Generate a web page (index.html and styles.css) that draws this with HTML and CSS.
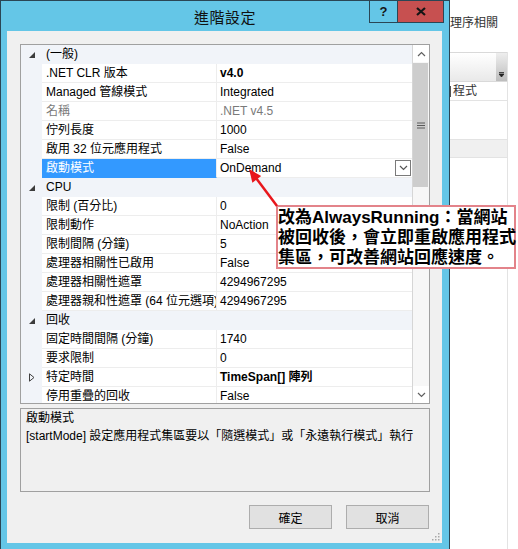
FILE: index.html
```html
<!DOCTYPE html>
<html lang="zh-Hant">
<head>
<meta charset="utf-8">
<title>進階設定</title>
<link rel="stylesheet" href="styles.css">
</head>
<body>
<div class="screen">
  <div class="dlg">
    <div class="titlebar">
      <span></span>
      <div class="title">進階設定</div>
      <div class="tbtns">
        <div class="help">?</div>
        <div class="close"><svg width="10" height="9" viewBox="0 0 10 9"><path d="M1 1L9 8M9 1L1 8" stroke="#151515" stroke-width="2.2" fill="none"/></svg></div>
      </div>
    </div>
    <div class="client">
      <div class="grid">
        <div class="rows">
          <div class="cat"><span class="tw"><svg class="exp" width="6" height="6" viewBox="0 0 6 6"><path d="M6 0V6H0Z"/></svg></span><span class="cl">(一般)</span></div>
          <div class="row"><span class="ind"></span><span class="name">.NET CLR 版本</span><span class="val b">v4.0</span></div>
          <div class="row"><span class="ind"></span><span class="name">Managed 管線模式</span><span class="val">Integrated</span></div>
          <div class="row dim"><span class="ind"></span><span class="name">名稱</span><span class="val">.NET v4.5</span></div>
          <div class="row"><span class="ind"></span><span class="name">佇列長度</span><span class="val">1000</span></div>
          <div class="row"><span class="ind"></span><span class="name">啟用 32 位元應用程式</span><span class="val">False</span></div>
          <div class="row"><span class="ind"></span><span class="name sel">啟動模式</span><span class="val drop">OnDemand<span class="ddbtn"><svg width="9" height="6" viewBox="0 0 9 6"><path d="M1 1L4.5 4.5L8 1" stroke="#555" stroke-width="1.2" fill="none"/></svg></span></span></div>
          <div class="cat"><span class="tw"><svg class="exp" width="6" height="6" viewBox="0 0 6 6"><path d="M6 0V6H0Z"/></svg></span><span class="cl">CPU</span></div>
          <div class="row"><span class="ind"></span><span class="name">限制 (百分比)</span><span class="val">0</span></div>
          <div class="row"><span class="ind"></span><span class="name">限制動作</span><span class="val">NoAction</span></div>
          <div class="row"><span class="ind"></span><span class="name">限制間隔 (分鐘)</span><span class="val">5</span></div>
          <div class="row"><span class="ind"></span><span class="name">處理器相關性已啟用</span><span class="val">False</span></div>
          <div class="row"><span class="ind"></span><span class="name">處理器相關性遮罩</span><span class="val">4294967295</span></div>
          <div class="row"><span class="ind"></span><span class="name">處理器親和性遮罩 (64 位元選項)</span><span class="val">4294967295</span></div>
          <div class="cat"><span class="tw"><svg class="exp" width="6" height="6" viewBox="0 0 6 6"><path d="M6 0V6H0Z"/></svg></span><span class="cl">回收</span></div>
          <div class="row"><span class="ind"></span><span class="name">固定時間間隔 (分鐘)</span><span class="val">1740</span></div>
          <div class="row"><span class="ind"></span><span class="name">要求限制</span><span class="val">0</span></div>
          <div class="row"><span class="ind tw"><svg width="6" height="9" viewBox="0 0 6 9"><path d="M0.5 0.8L5 4.5L0.5 8.2Z" fill="none" stroke="#404040" stroke-width="1"/></svg></span><span class="name">特定時間</span><span class="val b">TimeSpan[] 陣列</span></div>
          <div class="row"><span class="ind"></span><span class="name">停用重疊的回收</span><span class="val">False</span></div>
        </div>
        <div class="vscroll">
          <div class="sarrow"><svg width="9" height="6" viewBox="0 0 9 6"><path d="M1 5L4.5 1.5L8 5" stroke="#606060" stroke-width="1.2" fill="none"/></svg></div>
          <div class="strack">
            <div class="thumb"><svg width="8" height="7" viewBox="0 0 8 7"><path d="M0 1H8M0 3.5H8M0 6H8" stroke="#5a5a5a" stroke-width="1"/></svg></div>
          </div>
          <div class="sarrow"><svg width="9" height="6" viewBox="0 0 9 6"><path d="M1 1L4.5 4.5L8 1" stroke="#606060" stroke-width="1.2" fill="none"/></svg></div>
        </div>
      </div>
      <div class="desc">
        <div class="desc-title">啟動模式</div>
        <div class="desc-text">[startMode] 設定應用程式集區要以「隨選模式」或「永遠執行模式」執行</div>
      </div>
      <div class="actions">
        <button class="btn">確定</button>
        <button class="btn">取消</button>
      </div>
      <svg class="sizegrip" width="8" height="8" viewBox="0 0 8 8"><g fill="#a8a8a8"><rect x="6" y="0" width="1.5" height="1.5"/><rect x="3" y="3" width="1.5" height="1.5"/><rect x="6" y="3" width="1.5" height="1.5"/><rect x="0" y="6" width="1.5" height="1.5"/><rect x="3" y="6" width="1.5" height="1.5"/><rect x="6" y="6" width="1.5" height="1.5"/></g></svg>
    </div>
  </div>
  <div class="behind">
    <div class="ptxt">理序相關</div>
    <div class="bcol">
      <div class="colhdr"><span class="hfill"></span><span class="hdrop"><svg width="5" height="5" viewBox="0 0 5 5"><path d="M0 0.5H5M0 2H5L2.5 5Z" stroke="#222" stroke-width="0.8" fill="#222"/></svg></span></div>
      <div class="brow"><span class="bcut"></span>程式</div>
      <div class="bgap"></div>
      <div class="band"></div>
    </div>
  </div>
</div>
<div class="callout">改為AlwaysRunning：當網站<br>被回收後，會立即重啟應用程式<br>集區，可改善網站回應速度。</div>
<svg class="arrow" width="45" height="50" viewBox="240 160 45 50"><line x1="277" y1="206" x2="256" y2="178" stroke="#e8161c" stroke-width="2.5"/><path d="M249 169L261.2 176.1L252.4 182.7Z" fill="#e8161c"/></svg>
</body>
</html>
```
FILE: styles.css
```css
* { box-sizing: border-box; }
body {
  margin: 0;
  width: 518px;
  height: 549px;
  overflow: hidden;
  position: relative;
  background: #fff;
  font-family: "Liberation Sans", "Noto Sans CJK TC", sans-serif;
  font-size: 12px;
  color: #000;
}
.screen { display: flex; height: 549px; }

.dlg {
  width: 450px;
  flex: none;
  height: 549px;
  border: 1px solid #2a4655;
  border-bottom: 0;
  background: #64c6e7;
  padding-bottom: 6px;
  display: flex;
  flex-direction: column;
}
.titlebar {
  height: 30px;
  flex: none;
  display: grid;
  grid-template-columns: 1fr auto 1fr;
  padding: 0 5px;
}
.title {
  align-self: center;
  font-family: "Noto Sans CJK TC", sans-serif;
  font-size: 15px;
  line-height: 20px;
  color: #111;
  padding-top: 2px;
  letter-spacing: 0.5px;
}
.tbtns { justify-self: end; align-self: start; display: flex; }
.help {
  width: 28px; height: 22px;
  border-left: 1px solid #2a4655;
  border-bottom: 1px solid #2a4655;
  display: flex; align-items: center; justify-content: center;
  font-weight: bold; font-size: 13px; color: #151515;
}
.close {
  width: 47px; height: 22px;
  background: #c75050;
  border-left: 1px solid #2a4655;
  border-right: 1px solid #2a4655;
  border-bottom: 1px solid #2a4655;
  display: flex; align-items: center; justify-content: center;
}

.client {
  flex: 1;
  margin: 0 7px 0 6px;
  background: #f0f0f0;
  padding: 13px 12px 14px 13px;
  position: relative;
  display: flex;
  flex-direction: column;
}
.grid {
  height: 360px;
  flex: none;
  border: 1px solid #a0a0a0;
  display: flex;
  background: #fff;
}
.rows { flex: 1; overflow: hidden; }
.cat {
  height: 19px;
  display: grid;
  grid-template-columns: 21px 1fr;
  background: #f1f4f9;
  line-height: 19px;
}
.tw { display: flex; align-items: center; padding-left: 8px; }
.exp { fill: #3c3c3c; }
.cl { padding-left: 4px; }
.row {
  height: 19px;
  display: grid;
  grid-template-columns: 21px 175px 1fr;
  line-height: 18px;
  white-space: nowrap;
}
.ind { background: #f1f4f9; }
.name {
  padding-left: 4px;
  border-right: 1px solid #ededed;
  border-bottom: 1px solid #ededed;
  overflow: hidden;
}
.val {
  padding-left: 3px;
  border-bottom: 1px solid #ededed;
  overflow: hidden;
}
.b { font-weight: bold; }
.dim { color: #7a7a7a; }
.sel { background: #3399ff; color: #fff; border-bottom-color: #3399ff; }
.drop { display: flex; align-items: center; justify-content: space-between; }
.ddbtn {
  width: 16px; height: 16px;
  margin-right: 1px;
  border: 1px solid #7a7a7a;
  background: #fff;
  display: flex; align-items: center; justify-content: center;
}

.vscroll {
  width: 17px;
  flex: none;
  border-left: 1px solid #d6d6d6;
  background: #f7f7f7;
  display: flex;
  flex-direction: column;
}
.sarrow {
  height: 17px;
  flex: none;
  background: #fff;
  display: flex; align-items: center; justify-content: center;
}
.strack { flex: 1; padding: 1px 1px 0 0; }
.thumb {
  height: 124px;
  background: #cdcdcd;
  display: flex; align-items: center; justify-content: center;
}

.desc {
  height: 84px;
  flex: none;
  margin-top: 4px;
  border: 1px solid #a0a0a0;
  padding: 0 5px;
  line-height: 18px;
}
.desc-text { white-space: nowrap; }

.actions {
  margin-top: 13px;
  display: flex;
  justify-content: flex-end;
  gap: 14px;
  padding-right: 1px;
}
.btn {
  width: 83px; height: 24px;
  background: #e1e1e1;
  border: 1px solid #adadad;
  font-family: "Liberation Sans", "Noto Sans CJK TC", sans-serif;
  font-size: 12px;
  color: #000;
  padding: 0;
}
.sizegrip { position: absolute; right: 2px; bottom: 2px; }

.behind {
  flex: 1;
  display: flex;
  flex-direction: column;
  overflow: hidden;
  background: #fff;
  color: #333;
}
.ptxt {
  height: 52px;
  flex: none;
  padding-top: 15px;
  line-height: 16px;
  white-space: nowrap;
}
.bcol {
  width: 58px;
  flex: 1;
  border-right: 1px solid #e3e3e3;
}
.colhdr {
  height: 30px;
  border-top: 1px solid #d9d9d9;
  border-bottom: 1px solid #d9d9d9;
  display: flex;
  background: linear-gradient(#ffffff, #e9e9e9);
}
.hfill { flex: 1; }
.hdrop {
  width: 11px;
  background: linear-gradient(#eeeeee, #bdbdbd);
  display: flex;
  align-items: flex-end;
  justify-content: center;
  padding-bottom: 4px;
}
.brow {
  height: 19px;
  border-bottom: 1px solid #e3e3e3;
  line-height: 18px;
  white-space: nowrap;
  display: flex;
  align-items: center;
}
.bcut {
  width: 1px;
  height: 11px;
  background: #555;
  margin-right: 2px;
}
.bgap { height: 38px; }
.band {
  height: 19px;
  background: #f0f0f0;
  border-top: 1px solid #e3e3e3;
  border-bottom: 1px solid #e3e3e3;
}

.callout {
  position: absolute;
  left: 276px;
  top: 205px;
  width: 240px;
  height: 64px;
  border: 2px solid #e3838a;
  background: #fff;
  font-family: "Liberation Sans", "Noto Sans CJK TC", sans-serif;
  font-weight: bold;
  font-size: 17px;
  line-height: 20px;
  padding-top: 1px;
  white-space: nowrap;
  color: #000;
}
.arrow { position: absolute; left: 240px; top: 160px; }
```
